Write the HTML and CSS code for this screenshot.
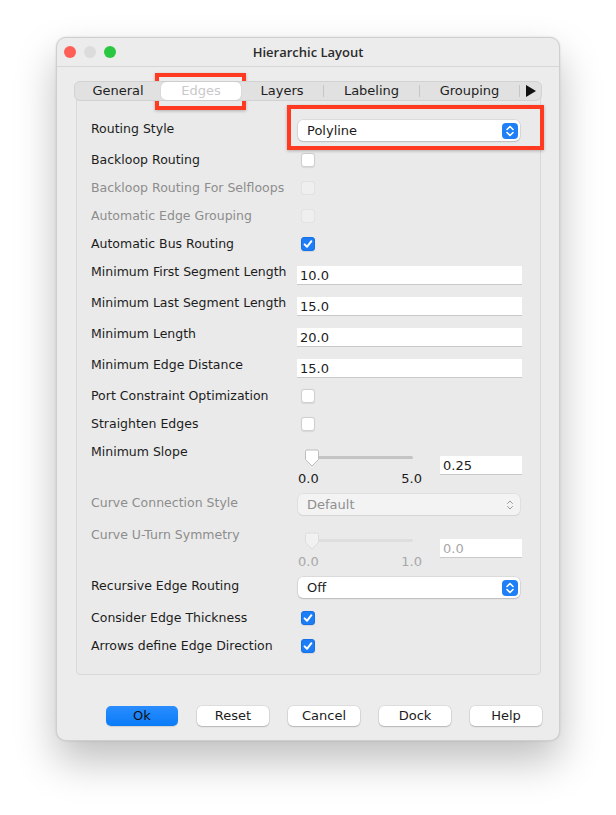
FILE: index.html
```html
<!DOCTYPE html>
<html lang="en">
<head>
  <meta charset="UTF-8" />
  <title>Hierarchic Layout</title>
  <link rel="stylesheet" href="styles.css">
</head>
<body>

  <div class="window">
    <!-- Barra de titulo -->
    <div class="titlebar">
      <div class="lights">
        <span class="light red"></span>
        <span class="light grey"></span>
        <span class="light green"></span>
      </div>
      <div class="title">Hierarchic Layout</div>
    </div>

    <div class="tabpane">
      <div class="tabs">
        <div class="tab t-general">General</div>
        <div class="tab t-edges selected">Edges</div>
        <div class="tab t-layers">Layers</div>
        <div class="sep"></div>
        <div class="tab t-labeling">Labeling</div>
        <div class="sep"></div>
        <div class="tab t-grouping">Grouping</div>
        <div class="sep"></div>
        <div class="tab t-more">
          <svg width="10" height="12" viewBox="0 0 10 12"><polygon points="0,0 10,6 0,12" fill="#111"/></svg>
        </div>
      </div>

      <div class="panel">
        <div class="row h31">
          <div class="label">Routing Style</div>
          <div class="select">
            <span>Polyline</span>
            <span class="arrows">
              <svg width="16" height="16" viewBox="0 0 16 16"><path d="M5 6.5 L8 3.5 L11 6.5 M5 9.5 L8 12.5 L11 9.5" fill="none" stroke="#fff" stroke-width="1.6" stroke-linecap="round" stroke-linejoin="round"/></svg>
            </span>
          </div>
        </div>

        <div class="row">
          <div class="label">Backloop Routing</div>
          <div class="check"></div>
        </div>
        <div class="row">
          <div class="label off">Backloop Routing For Selfloops</div>
          <div class="check disabled"></div>
        </div>
        <div class="row">
          <div class="label off">Automatic Edge Grouping</div>
          <div class="check disabled"></div>
        </div>
        <div class="row">
          <div class="label">Automatic Bus Routing</div>
          <div class="check on">
            <svg width="14" height="14" viewBox="0 0 14 14"><path d="M3.6 7.4 L6 9.8 L10.4 4.2" fill="none" stroke="#fff" stroke-width="2" stroke-linecap="round" stroke-linejoin="round"/></svg>
          </div>
        </div>

        <div class="row h31">
          <div class="label">Minimum First Segment Length</div>
          <div class="field">10.0</div>
        </div>
        <div class="row h31">
          <div class="label">Minimum Last Segment Length</div>
          <div class="field">15.0</div>
        </div>
        <div class="row h31">
          <div class="label">Minimum Length</div>
          <div class="field">20.0</div>
        </div>
        <div class="row h31">
          <div class="label">Minimum Edge Distance</div>
          <div class="field">15.0</div>
        </div>

        <div class="row">
          <div class="label">Port Constraint Optimization</div>
          <div class="check"></div>
        </div>
        <div class="row">
          <div class="label">Straighten Edges</div>
          <div class="check"></div>
        </div>

        <div class="row h51">
          <div class="label">Minimum Slope</div>
          <div class="slider-box">
            <div class="slider">
              <div class="track"></div>
              <svg class="thumb" width="16" height="19" viewBox="0 0 16 19"><path d="M1.5 2.5 Q1.5 1 3 1 H13 Q14.5 1 14.5 2.5 V10.5 L8 17 L1.5 10.5 Z" fill="#fff" stroke="#bdbdbd"/></svg>
              <div class="ticks"><span>0.0</span><span>5.0</span></div>
            </div>
            <div class="field small">0.25</div>
          </div>
        </div>

        <div class="row h32">
          <div class="label off">Curve Connection Style</div>
          <div class="select disabled">
            <span>Default</span>
            <span class="arrows">
              <svg width="16" height="16" viewBox="0 0 16 16"><path d="M5.5 6.5 L8 4 L10.5 6.5 M5.5 9.5 L8 12 L10.5 9.5" fill="none" stroke="#9a9a9a" stroke-width="1" stroke-linecap="round" stroke-linejoin="round"/></svg>
            </span>
          </div>
        </div>

        <div class="row h51">
          <div class="label off">Curve U-Turn Symmetry</div>
          <div class="slider-box disabled">
            <div class="slider">
              <div class="track"></div>
              <svg class="thumb" width="16" height="19" viewBox="0 0 16 19"><path d="M1.5 2.5 Q1.5 1 3 1 H13 Q14.5 1 14.5 2.5 V10.5 L8 17 L1.5 10.5 Z" fill="#f1f1f1" stroke="#dcdcdc"/></svg>
              <div class="ticks"><span>0.0</span><span>1.0</span></div>
            </div>
            <div class="field small">0.0</div>
          </div>
        </div>

        <div class="row h32">
          <div class="label">Recursive Edge Routing</div>
          <div class="select">
            <span>Off</span>
            <span class="arrows">
              <svg width="16" height="16" viewBox="0 0 16 16"><path d="M5 6.5 L8 3.5 L11 6.5 M5 9.5 L8 12.5 L11 9.5" fill="none" stroke="#fff" stroke-width="1.6" stroke-linecap="round" stroke-linejoin="round"/></svg>
            </span>
          </div>
        </div>

        <div class="row">
          <div class="label">Consider Edge Thickness</div>
          <div class="check on">
            <svg width="14" height="14" viewBox="0 0 14 14"><path d="M3.6 7.4 L6 9.8 L10.4 4.2" fill="none" stroke="#fff" stroke-width="2" stroke-linecap="round" stroke-linejoin="round"/></svg>
          </div>
        </div>
        <div class="row">
          <div class="label">Arrows define Edge Direction</div>
          <div class="check on">
            <svg width="14" height="14" viewBox="0 0 14 14"><path d="M3.6 7.4 L6 9.8 L10.4 4.2" fill="none" stroke="#fff" stroke-width="2" stroke-linecap="round" stroke-linejoin="round"/></svg>
          </div>
        </div>
      </div>
    </div>

    <div class="buttons">
      <div class="btn default">Ok</div>
      <div class="btn">Reset</div>
      <div class="btn">Cancel</div>
      <div class="btn">Dock</div>
      <div class="btn">Help</div>
    </div>

    <!-- Marcas rojas -->
    <div class="mark mark-tab"></div>
    <div class="mark mark-select"></div>
  </div>

</body>
</html>
```

FILE: styles.css
```css
html, body {
  margin: 0;
  padding: 0;
  background: #fff;
}

body {
  min-height: 100vh;
  box-sizing: border-box;
  padding: 37px 0 0 56px;
  font-family: "DejaVu Sans", "Liberation Sans", sans-serif;
  font-size: 12.5px;
  color: #1c1c1c;
}

.window {
  position: relative;
  width: 504px;
  height: 704px;
  box-sizing: border-box;
  background: #ececec;
  border: 1px solid #cfcfcf;
  border-radius: 10px;
  box-shadow: 0 20px 40px rgba(0,0,0,0.25), 0 0 2px rgba(0,0,0,0.15);
}

.titlebar {
  position: relative;
  height: 28px;
  border-bottom: 1px solid #d7d7d7;
  display: flex;
  align-items: center;
  justify-content: center;
}

.lights {
  position: absolute;
  left: 7px;
  top: 8px;
  display: flex;
  gap: 8px;
}

.light {
  width: 12px;
  height: 12px;
  border-radius: 50%;
}

.light.red { background: #fe5f57; }
.light.grey { background: #dcdcdc; }
.light.green { background: #2ac840; }

.title {
  font-family: "Open Sans", "DejaVu Sans", sans-serif;
  font-weight: 600;
  font-size: 13px;
  color: #2b2b2b;
}

.tabpane {
  margin: 14px 17px 0 17px;
}

.tabs {
  position: relative;
  z-index: 1;
  height: 20px;
  box-sizing: border-box;
  display: flex;
  align-items: center;
  background: #e1e1e1;
  border: 1px solid #d2d2d2;
  border-radius: 6px;
}

.tab {
  height: 18px;
  line-height: 18px;
  text-align: center;
  font-size: 13px;
  color: #1e1e1e;
}

.t-general { width: 86px; }
.t-edges { width: 80px; }
.t-layers { width: 82px; }
.t-labeling { width: 95px; }
.t-grouping { width: 99px; }
.t-more { flex: 1; display: flex; align-items: center; justify-content: center; }

.tab.selected {
  background: #fff;
  border-radius: 5px;
  color: #c9c9c9;
  box-shadow: 0 0 1px rgba(0,0,0,0.25);
}

.sep {
  width: 1px;
  height: 12px;
  background: #c6c6c6;
}

.panel {
  margin: -10px 1px 0 2px;
  padding: 23px 0 14px 14px;
  border: 1px solid #d9d9d9;
  border-radius: 4px;
  background: #eaeaea;
}

.row {
  display: flex;
  align-items: flex-start;
  height: 28px;
}

.row.h31 { height: 31px; }
.row.h32 { height: 32px; }
.row.h51 { height: 51px; }

.label {
  width: 207px;
  flex: none;
  padding-top: 6px;
  line-height: 16px;
  white-space: nowrap;
}

.label.off {
  color: #8d8d8d;
}

.check {
  margin: 7px 0 0 3px;
  width: 14px;
  height: 14px;
  box-sizing: border-box;
  background: #fff;
  border: 1px solid #cfcfcf;
  border-radius: 3px;
  box-shadow: 0 0.5px 1px rgba(0,0,0,0.08);
}

.check.disabled {
  background: #efefef;
  border-color: #e2e2e2;
  box-shadow: none;
}

.check.on {
  background: #1c7df6;
  border-color: #1670e6;
}

.check svg {
  display: block;
  margin: -1px;
}

.select {
  margin-top: 5px;
  width: 222px;
  height: 21px;
  box-sizing: border-box;
  display: flex;
  align-items: center;
  justify-content: space-between;
  padding: 0 2px 0 9px;
  background: #fff;
  border-radius: 5px;
  box-shadow: 0 0 0 0.5px rgba(0,0,0,0.12), 0 1px 1.5px rgba(0,0,0,0.15);
  font-size: 13px;
}

.select .arrows {
  width: 16px;
  height: 16px;
  border-radius: 4px;
  background: #1f7ff7;
}

.select .arrows svg {
  display: block;
}

.select.disabled {
  background: #f3f3f3;
  color: #8f8f8f;
  box-shadow: 0 0 0 0.5px rgba(0,0,0,0.08), 0 1px 1px rgba(0,0,0,0.06);
}

.select.disabled .arrows {
  background: none;
}

.field {
  margin: 8px 0 0 -1px;
  width: 225px;
  height: 19px;
  box-sizing: border-box;
  padding: 1px 0 0 3px;
  background: #fff;
  border-bottom: 1px solid #c9c9c9;
  font-size: 13px;
  line-height: 17px;
}

.slider-box {
  display: flex;
  align-items: flex-start;
}

.slider {
  position: relative;
  width: 124px;
  height: 50px;
}

.track {
  margin: 18px 0 0 7px;
  width: 108px;
  height: 3px;
  border-radius: 2px;
  background: #c4c4c4;
}

.thumb {
  position: absolute;
  left: 6px;
  top: 11px;
}

.ticks {
  display: flex;
  justify-content: space-between;
  margin-top: 12px;
  font-size: 13px;
  line-height: 16px;
}

.field.small {
  margin: 18px 0 0 18px;
  width: 82px;
}

.slider-box.disabled .track { background: #dedede; }
.slider-box.disabled .ticks,
.slider-box.disabled .field { color: #a8a8a8; }

.buttons {
  display: flex;
  gap: 19px;
  margin: 31px 0 0 49px;
}

.btn {
  width: 72px;
  height: 20px;
  line-height: 20px;
  text-align: center;
  font-size: 13px;
  background: #fff;
  border-radius: 5px;
  box-shadow: 0 0 0 0.5px rgba(0,0,0,0.12), 0 1px 1.5px rgba(0,0,0,0.18);
}

.btn.default {
  background: linear-gradient(#2a8dff, #0a7bf7);
  color: #111;
  box-shadow: 0 1px 1px rgba(0,0,0,0.12);
}

.mark {
  position: absolute;
  border: 4px solid #ff3a20;
  box-sizing: border-box;
  box-shadow: 0 1px 3px rgba(0,0,0,0.25);
}

.mark-tab {
  left: 98px;
  top: 35px;
  width: 91px;
  height: 37px;
}

.mark-select {
  left: 230px;
  top: 67px;
  width: 257px;
  height: 45px;
}
```
